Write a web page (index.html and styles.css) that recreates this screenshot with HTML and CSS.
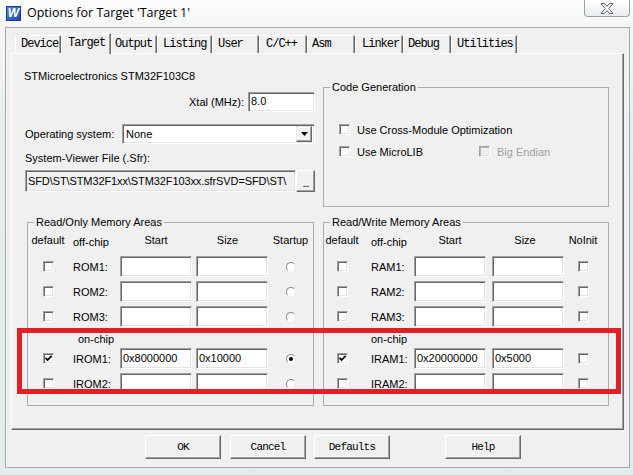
FILE: index.html
```
<!DOCTYPE html>
<html>
<head>
<meta charset="utf-8">
<title>Options for Target</title>
<link rel="stylesheet" href="styles.css">
</head>
<body>
<div class="window">
  <div class="titlebar">
    <span class="appicon">W</span>
    <span class="title">Options for Target 'Target 1'</span>
    <div class="close">
      <svg width="14" height="11" viewBox="0 0 14 11"><path d="M1 0.5 H4.5 L7 3.5 L9.5 0.5 H13 L8.8 5.5 L13 10.5 H9.5 L7 7.5 L4.5 10.5 H1 L5.2 5.5 Z" fill="#fff" stroke="#5a6068" stroke-width="1"/></svg>
    </div>
  </div>
  <div class="client">
    <div class="tabs">
      <div class="tab t-device">Device</div>
      <div class="tab sel t-target">Target</div>
      <div class="tab t-output">Output</div>
      <div class="tab t-listing">Listing</div>
      <div class="tab t-user">User</div>
      <div class="tab t-cpp">C/C++</div>
      <div class="tab t-asm">Asm</div>
      <div class="tab t-linker">Linker</div>
      <div class="tab t-debug">Debug</div>
      <div class="tab t-util">Utilities</div>
    </div>
    <div class="panel">
      <div class="top">
        <div class="devcol">
          <div class="devname">STMicroelectronics STM32F103C8</div>
          <div class="xtalrow"><span>Xtal (MHz):</span><div class="edit xtal">8.0</div></div>
          <div class="osrow">
            <span class="oslabel">Operating system:</span>
            <div class="combo"><span class="combotext">None</span><span class="dropbtn"><svg width="7" height="4" viewBox="0 0 7 4"><path d="M0 0 H7 L3.5 4 Z" fill="#000"/></svg></span></div>
          </div>
          <div class="sfrlabel">System-Viewer File (.Sfr):</div>
          <div class="sfrrow"><div class="edit ro-edit sfr">SFD\ST\STM32F1xx\STM32F103xx.sfrSVD=SFD\ST\</div><div class="dots">...</div></div>
        </div>
        <fieldset class="group codegen">
          <legend>Code Generation</legend>
          <div class="cg-body">
            <div class="chkline"><span class="chk"></span><span>Use Cross-Module Optimization</span></div>
            <div class="chkline"><span class="chk"></span><span class="mlib">Use MicroLIB</span><span class="chk dis"></span><span class="distext">Big Endian</span></div>
          </div>
        </fieldset>
      </div>
      <div class="mem">
        <fieldset class="group memgroup rogroup">
          <legend>Read/Only Memory Areas</legend>
          <div class="memgrid rogrid">
            <div class="hd c">default</div><div class="hd lbl">off-chip</div><div class="hd c">Start</div><div class="hd c sizehd">Size</div><div class="hd c">Startup</div>

            <div class="cell"><span class="chk"></span></div><div class="lbl">ROM1:</div><div class="edit"></div><div class="edit e2"></div><div class="cell"><span class="radio"></span></div>
            <div class="cell"><span class="chk"></span></div><div class="lbl">ROM2:</div><div class="edit"></div><div class="edit e2"></div><div class="cell"><span class="radio"></span></div>
            <div class="cell"><span class="chk"></span></div><div class="lbl">ROM3:</div><div class="edit"></div><div class="edit e2"></div><div class="cell"><span class="radio"></span></div>

            <div class="onchip">on-chip</div>

            <div class="cell"><span class="chk on"><svg width="9" height="9" viewBox="0 0 9 9"><path d="M1.5 3.8 L3.6 6 L7.6 1.8" fill="none" stroke="#000" stroke-width="1.8"/></svg></span></div><div class="lbl">IROM1:</div><div class="edit">0x8000000</div><div class="edit e2">0x10000</div><div class="cell"><span class="radio on"></span></div>
            <div class="cell"><span class="chk"></span></div><div class="lbl">IROM2:</div><div class="edit"></div><div class="edit e2"></div><div class="cell"><span class="radio"></span></div>
          </div>
        </fieldset>
        <fieldset class="group memgroup rwgroup">
          <legend>Read/Write Memory Areas</legend>
          <div class="memgrid rwgrid">
            <div class="hd c">default</div><div class="hd lbl">off-chip</div><div class="hd c">Start</div><div class="hd c">Size</div><div class="hd c">NoInit</div>

            <div class="cell"><span class="chk"></span></div><div class="lbl">RAM1:</div><div class="edit"></div><div class="edit e2"></div><div class="cell"><span class="chk"></span></div>
            <div class="cell"><span class="chk"></span></div><div class="lbl">RAM2:</div><div class="edit"></div><div class="edit e2"></div><div class="cell"><span class="chk"></span></div>
            <div class="cell"><span class="chk"></span></div><div class="lbl">RAM3:</div><div class="edit"></div><div class="edit e2"></div><div class="cell"><span class="chk"></span></div>

            <div class="onchip">on-chip</div>

            <div class="cell"><span class="chk on"><svg width="9" height="9" viewBox="0 0 9 9"><path d="M1.5 3.8 L3.6 6 L7.6 1.8" fill="none" stroke="#000" stroke-width="1.8"/></svg></span></div><div class="lbl">IRAM1:</div><div class="edit">0x20000000</div><div class="edit e2">0x5000</div><div class="cell"><span class="chk"></span></div>
            <div class="cell"><span class="chk"></span></div><div class="lbl">IRAM2:</div><div class="edit"></div><div class="edit e2"></div><div class="cell"><span class="chk"></span></div>
          </div>
        </fieldset>
      </div>
    </div>
    <div class="buttons">
      <div class="btn b-ok">OK</div>
      <div class="btn b-cancel">Cancel</div>
      <div class="btn b-defaults">Defaults</div>
      <div class="btn b-help">Help</div>
    </div>
  </div>
  <div class="redbox"></div>
</div>
</body>
</html>
```

FILE: styles.css
```
* { box-sizing: border-box; }

body {
  margin: 0;
  width: 633px;
  height: 475px;
  overflow: hidden;
  font-family: "Liberation Sans", Arial, sans-serif;
  font-size: 11px;
  line-height: 14px;
  color: #000;
  background: #e9eef0;
}

.window {
  position: relative;
  width: 633px;
  height: 475px;
  display: flex;
  flex-direction: column;
  background: linear-gradient(180deg, #fcfcfc 0px, #f5f7f7 26px, #e7edee 120px, #e4ebec 475px);
}

/* title bar */
.titlebar {
  height: 27px;
  display: flex;
  align-items: flex-start;
  padding-left: 6px;
  flex: none;
}
.appicon {
  margin-top: 6px;
  width: 15px;
  height: 15px;
  border: 1px solid #1a3d8c;
  background: linear-gradient(135deg, #4f86e0, #1f4aa8);
  color: #fff;
  font: italic bold 12px/13px "Liberation Sans", Arial, sans-serif;
  text-align: center;
}
.title {
  margin-left: 6px;
  margin-top: 4px;
  font-family: "Open Sans", "Liberation Sans", sans-serif;
  font-size: 12.5px;
  line-height: 18px;
  color: #000;
}
.close {
  margin-left: auto;
  margin-right: 3px;
  width: 46px;
  height: 17px;
  border: 1px solid #9aa1a8;
  border-top: none;
  border-radius: 0 0 4px 4px;
  background: linear-gradient(180deg, #ffffff, #e9ecef);
  display: flex;
  align-items: center;
  justify-content: center;
}

/* client area */
.client {
  margin-left: 5px;
  width: 625px;
  height: 441px;
  border: 1px solid #a3acb3;
  background: #f0f0f0;
  padding: 5px 5px 0 5px;
  display: flex;
  flex-direction: column;
  flex: none;
}

.tabs {
  height: 20px;
  display: flex;
  align-items: flex-end;
  padding-left: 4px;
  position: relative;
  z-index: 1;
}
.tab {
  height: 18px;
  line-height: 17px;
  padding-left: 5px;
  border-top: 1px solid #fff;
  border-left: 1px solid #fff;
  border-right: 1px solid #696969;
  box-shadow: inset -1px 0 #a0a0a0;
  background: #f0f0f0;
  font-family: "Liberation Mono", "Courier New", monospace;
  font-size: 12px;
  letter-spacing: -1px;
  white-space: nowrap;
}
.tab.sel {
  height: 21px;
  line-height: 19px;
  margin-bottom: -1px;
  padding-left: 6px;
}
.t-device { width: 46px; }
.t-target { width: 50px; }
.t-output { width: 46px; padding-left: 3px; }
.t-listing { width: 55px; }
.t-user { width: 47px; }
.t-cpp { width: 48px; padding-left: 6px; }
.t-asm { width: 48px; padding-left: 4px; }
.t-linker { width: 48px; padding-left: 6px; }
.t-debug { width: 48px; padding-left: 4px; }
.t-util { width: 66px; }

.panel {
  width: 613px;
  height: 377px;
  border: 1px solid;
  border-color: #fff #696969 #696969 #fff;
  box-shadow: inset -1px -1px #a0a0a0;
  padding: 15px 0 0 13px;
  flex: none;
}

.top {
  display: flex;
  align-items: flex-start;
}
.devcol {
  width: 290px;
}
.devname {
  margin-left: -1px;
}
.xtalrow {
  margin-top: 9px;
  display: flex;
  justify-content: flex-end;
  align-items: center;
  gap: 4px;
}
.edit {
  height: 21px;
  width: 72px;
  border: 1px solid;
  border-color: #a0a0a0 #fff #fff #a0a0a0;
  box-shadow: inset 1px 1px #696969, inset -1px -1px #e3e3e3;
  background: #fff;
  padding: 2px 0 0 2px;
  line-height: 15px;
  white-space: nowrap;
  overflow: hidden;
}
.edit.xtal {
  width: 67px;
  height: 20px;
  padding-top: 1px;
}
.osrow {
  margin-top: 12px;
  display: flex;
  align-items: center;
}
.oslabel {
  width: 97px;
}
.combo {
  width: 193px;
  height: 20px;
  border: 1px solid;
  border-color: #a0a0a0 #fff #fff #a0a0a0;
  box-shadow: inset 1px 1px #696969, inset -1px -1px #e3e3e3;
  background: #fff;
  display: flex;
  align-items: center;
  padding: 0 2px 0 3px;
}
.combotext {
  flex: 1;
}
.dropbtn {
  width: 16px;
  height: 16px;
  border: 1px solid;
  border-color: #e3e3e3 #696969 #696969 #e3e3e3;
  box-shadow: inset -1px -1px #a0a0a0, inset 1px 1px #fff;
  background: #f0f0f0;
  display: flex;
  align-items: center;
  justify-content: center;
}
.sfrlabel {
  margin-top: 7px;
}
.sfrrow {
  margin-top: 5px;
  display: flex;
}
.edit.sfr {
  width: 271px;
  height: 22px;
  background: #f0f0f0;
  padding: 3px 0 0 2px;
  letter-spacing: -0.1px;
}
.dots {
  width: 19px;
  height: 22px;
  border: 1px solid;
  border-color: #fff #696969 #696969 #fff;
  box-shadow: inset -1px -1px #a0a0a0;
  background: #f0f0f0;
  text-align: center;
  line-height: 24px;
  letter-spacing: -1px;
}

/* group boxes */
.group {
  margin: 0;
  padding: 0;
  border: 1px solid #acacac;
  min-inline-size: 0;
}
.group legend {
  margin-left: 6px;
  padding: 0 2px;
  line-height: 14px;
}
.codegen {
  width: 286px;
  height: 127px;
  margin-top: 11px;
  margin-left: 8px;
}
.cg-body {
  padding: 28px 0 0 15px;
}
.chkline {
  height: 15px;
  display: flex;
  align-items: center;
}
.chkline + .chkline {
  margin-top: 7px;
}
.chk {
  width: 11px;
  height: 11px;
  flex: none;
  border: 1px solid;
  border-color: #a0a0a0 #fff #fff #a0a0a0;
  box-shadow: inset 1px 1px #696969, inset -1px -1px #e3e3e3;
  background: #fff;
  display: flex;
  align-items: center;
  justify-content: center;
}
.chkline .chk {
  margin-right: 7px;
}
.chk.dis {
  background: #f0f0f0;
  box-shadow: inset 1px 1px #b5b5b5, inset -1px -1px #e3e3e3;
}
.mlib {
  width: 122px;
}
.distext {
  color: #a0a0a0;
}

.mem {
  margin-top: 8px;
  display: flex;
}
.memgroup {
  height: 191px;
}
.rogroup {
  width: 287px;
  margin-left: 2px;
}
.rwgroup {
  width: 286px;
  margin-left: 9px;
}
.memgrid {
  display: grid;
  grid-template-rows: 20px 21px 21px 21px 13px 21px 21px;
  row-gap: 4px;
  padding-top: 3px;
}
.rogrid {
  grid-template-columns: 40px 52px 72px 76px 45px;
}
.rwgrid {
  grid-template-columns: 36px 54px 72px 78px 38px;
}
.hd {
  align-self: start;
  line-height: 16px;
  white-space: nowrap;
}
.c {
  text-align: center;
}
.sizehd {
  padding-right: 5px;
}
.cell {
  display: flex;
  align-items: center;
  justify-content: center;
}
.lbl {
  align-self: center;
  white-space: nowrap;
}
.rogrid .lbl { padding-left: 5px; }
.rwgrid .lbl { padding-left: 11px; }
.e2 {
  justify-self: end;
}
.onchip {
  grid-column: 2 / span 4;
  line-height: 17px;
  height: 17px;
  align-self: start;
}
.rogrid .onchip { padding-left: 10px; }
.rwgrid .onchip { padding-left: 11px; }

.radio {
  width: 10px;
  height: 10px;
  border-radius: 50%;
  border: 1px solid;
  border-color: #8a8a8a #e8e8e8 #f8f8f8 #8a8a8a;
  background: #fff;
  display: flex;
  align-items: center;
  justify-content: center;
}
.radio.on::after {
  content: "";
  width: 4px;
  height: 4px;
  border-radius: 50%;
  background: #000;
}

/* buttons */
.buttons {
  margin-top: 5px;
  padding-left: 134px;
  display: flex;
}
.btn {
  width: 76px;
  height: 24px;
  border: 1px solid;
  border-color: #fff #696969 #696969 #fff;
  box-shadow: inset -1px -1px #a0a0a0;
  background: #f0f0f0;
  font-family: "Liberation Mono", "Courier New", monospace;
  font-size: 11px;
  letter-spacing: -0.8px;
  line-height: 22px;
  text-align: center;
}
.b-cancel { margin-left: 9px; }
.b-defaults { margin-left: 8px; }
.b-help { margin-left: 55px; }

/* annotation overlay */
.redbox {
  position: absolute;
  left: 17px;
  top: 328px;
  width: 604px;
  height: 66px;
  border: 5px solid #e21f26;
}
```
